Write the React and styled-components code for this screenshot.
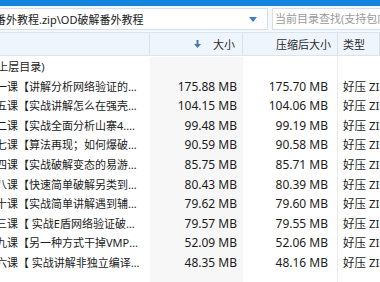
import styled, { createGlobalStyle } from "styled-components";

const rows = [
  { name: "(上层目录)", indent: -6 },
  { name: "第一课【讲解分析网络验证的原理与实现】", size: "175.88 MB", packed: "175.70 MB" },
  { name: "第五课【实战讲解怎么在强壳下定位关键】", size: "104.15 MB", packed: "104.06 MB" },
  { name: "第二课【实战全面分析山寨4.0网络验证】", size: "99.48 MB", packed: "99.19 MB" },
  { name: "第七课【算法再现；如何爆破算法验证】", size: "90.59 MB", packed: "90.58 MB" },
  { name: "第四课【实战破解变态的易游网络验证】", size: "85.75 MB", packed: "85.71 MB" },
  { name: "第八课【快速简单破解另类到期验证】", size: "80.43 MB", packed: "80.39 MB" },
  { name: "第十课【实战简单讲解遇到辅助类软件】", size: "79.62 MB", packed: "79.60 MB" },
  { name: "第三课【 实战E盾网络验证破解详解】", size: "79.57 MB", packed: "79.55 MB" },
  { name: "第九课【另一种方式干掉VMP保护软件】", size: "52.09 MB", packed: "52.06 MB" },
  { name: "第六课【 实战讲解非独立编译的程序】", size: "48.35 MB", packed: "48.16 MB" },
];

const App = () => {
  return (
    <>
      <GlobalStyle />
      <Window>
        <TitleBar />
        <Toolbar>
          <AddressBox>
            <AddressText>番外教程.zip\OD破解番外教程</AddressText>
            <DropArrow viewBox="0 0 8 5">
              <path d="M0 0h8L4 5z" fill="#3f7fc1" />
            </DropArrow>
          </AddressBox>
          <SearchBox>当前目录查找(支持包内查找)</SearchBox>
        </Toolbar>
        <Header>
          <HeadCell />
          <HeadCell $align="right">
            <SortIcon viewBox="0 0 7 8">
              <path d="M2.5 0h2v4H7L3.5 8 0 4h2.5z" fill="#4a7aa8" />
            </SortIcon>
            大小
          </HeadCell>
          <HeadCell $align="right" $pad="6px">
            压缩后大小
          </HeadCell>
          <HeadCell $align="left">类型</HeadCell>
        </Header>
        <List>
          {rows.map((row, i) => (
            <Row key={i}>
              <Name $indent={row.indent ?? -15}>{row.name}</Name>
              <Size>{row.size}</Size>
              <Packed>{row.packed}</Packed>
              <Type>{row.size && "好压 ZIP 压缩文件"}</Type>
            </Row>
          ))}
          <Row $fill>
            <Name />
            <Size />
            <Packed />
            <Type />
          </Row>
        </List>
      </Window>
    </>
  );
};

const GlobalStyle = createGlobalStyle`
  html, body {
    margin: 0;
    padding: 0;
    background: #ffffff;
  }
  body {
    font-family: "Noto Sans", "Noto Sans CJK SC", sans-serif;
    color: #1c1c1c;
  }
`;

const Window = styled.div`
  width: 380px;
  height: 282px;
  overflow: hidden;
  display: flex;
  flex-direction: column;
  background: #ffffff;
`;

const TitleBar = styled.div`
  height: 6px;
  flex-shrink: 0;
  background: #1284dc;
`;

const Toolbar = styled.div`
  height: 26px;
  flex-shrink: 0;
  display: flex;
  align-items: center;
  gap: 4px;
  box-sizing: border-box;
  background: #f4f7fb;
`;

const AddressBox = styled.div`
  margin-left: -4px;
  width: 272px;
  height: 22px;
  box-sizing: border-box;
  border: 1px solid #d6dee8;
  background: #ffffff;
  display: flex;
  align-items: center;
  flex-shrink: 0;
`;

const AddressText = styled.div`
  flex: 1;
  font-size: 11px;
  white-space: nowrap;
  overflow: hidden;
  text-indent: -2px;
  color: #1a1a1a;
`;

const DropArrow = styled.svg`
  width: 8px;
  height: 5px;
  margin-right: 10px;
`;

const SearchBox = styled.div`
  flex: 1;
  height: 22px;
  box-sizing: border-box;
  border: 1px solid #d6dee8;
  border-right: none;
  background: #ffffff;
  font-size: 11px;
  line-height: 20px;
  padding-left: 2px;
  color: #9a9a9a;
  white-space: nowrap;
  overflow: hidden;
`;

const columns = "150px 93px 95px 1fr";

const Header = styled.div`
  display: grid;
  grid-template-columns: ${columns};
  height: 24px;
  flex-shrink: 0;
  box-sizing: border-box;
  border-top: 1px solid #dbe4ee;
  border-bottom: 1px solid #dbe4ee;
  background: #eef5fc;
`;

const HeadCell = styled.div`
  display: flex;
  align-items: center;
  justify-content: ${(p) => (p.$align === "right" ? "flex-end" : "flex-start")};
  padding: ${(p) =>
    p.$align === "right" ? `0 ${p.$pad || "7px"} 0 0` : "0 0 0 5px"};
  font-size: 11px;
  color: #2b2b2b;
  border-right: 1px solid #d9e2ec;
  white-space: nowrap;
  overflow: hidden;
`;

const SortIcon = styled.svg`
  width: 7px;
  height: 8px;
  margin-right: 12px;
`;

const List = styled.div`
  flex: 1;
  display: flex;
  flex-direction: column;
  padding-top: 1px;
`;

const Row = styled.div`
  display: grid;
  grid-template-columns: ${columns};
  height: 19.6px;
  flex: ${(p) => (p.$fill ? "1" : "none")};
`;

const Name = styled.div`
  font-size: 11px;
  line-height: 19.6px;
  white-space: nowrap;
  overflow: hidden;
  text-overflow: ellipsis;
  text-indent: ${(p) => p.$indent}px;
  padding-right: 9px;
`;

const Size = styled.div`
  background: #f7f7f7;
  font-size: 12px;
  text-align: right;
  padding-right: 6px;
  line-height: 19.6px;
  white-space: nowrap;
`;

const Packed = styled.div`
  font-size: 12px;
  text-align: right;
  padding-right: 9px;
  line-height: 19.6px;
  border-right: 1px solid #ececec;
  white-space: nowrap;
`;

const Type = styled.div`
  font-size: 11.5px;
  padding-left: 5px;
  line-height: 19.6px;
  white-space: nowrap;
  overflow: hidden;
`;

export default App;
